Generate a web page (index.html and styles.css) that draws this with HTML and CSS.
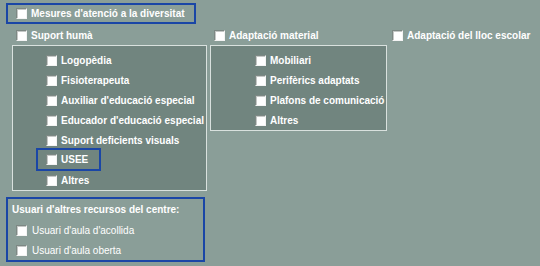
FILE: index.html
```html
<!DOCTYPE html>
<html lang="ca">
<head>
    <meta charset="UTF-8">
    <title>Mesures d'atenció a la diversitat</title>
    <link rel="stylesheet" href="styles.css">
</head>
<body>
    <div class="page">
        <div class="main-check">
            <span class="check"></span>
            <span class="label">Mesures d'atenció a la diversitat</span>
        </div>

        <div class="columns">
            <div class="group group-human">
                <div class="group-head">
                    <span class="check"></span>
                    <span class="label">Suport humà</span>
                </div>
                <div class="group-box">
                    <div class="item"><span class="check"></span><span class="label">Logopèdia</span></div>
                    <div class="item"><span class="check"></span><span class="label">Fisioterapeuta</span></div>
                    <div class="item"><span class="check"></span><span class="label">Auxiliar d'educació especial</span></div>
                    <div class="item"><span class="check"></span><span class="label">Educador d'educació especial</span></div>
                    <div class="item"><span class="check"></span><span class="label">Suport deficients visuals</span></div>
                    <div class="item marked"><span class="check"></span><span class="label">USEE</span></div>
                    <div class="item"><span class="check"></span><span class="label">Altres</span></div>
                </div>
            </div>

            <div class="group group-material">
                <div class="group-head">
                    <span class="check"></span>
                    <span class="label">Adaptació material</span>
                </div>
                <div class="group-box">
                    <div class="item"><span class="check"></span><span class="label">Mobiliari</span></div>
                    <div class="item"><span class="check"></span><span class="label">Perifèrics adaptats</span></div>
                    <div class="item"><span class="check"></span><span class="label">Plafons de comunicació</span></div>
                    <div class="item"><span class="check"></span><span class="label">Altres</span></div>
                </div>
            </div>

            <div class="group group-place">
                <div class="group-head">
                    <span class="check"></span>
                    <span class="label">Adaptació del lloc escolar</span>
                </div>
            </div>
        </div>

        <div class="resources">
            <div class="resources-title">Usuari d'altres recursos del centre:</div>
            <div class="res-item"><span class="check"></span><span class="label">Usuari d'aula d'acollida</span></div>
            <div class="res-item"><span class="check"></span><span class="label">Usuari d'aula oberta</span></div>
        </div>
    </div>
</body>
</html>
```

FILE: styles.css
```css
body {
    margin: 0;
    padding: 0;
    background-color: #8a9e98;
    font-family: "Liberation Sans", Arial, sans-serif;
    color: #fff;
}

.page {
    padding: 3px 0 0 6px;
}

.check {
    display: inline-block;
    width: 9px;
    height: 9px;
    background-color: #fff;
    border: 1px solid;
    border-color: #7d8884 #f4f4f4 #f4f4f4 #7d8884;
    box-shadow: inset 1px 1px 0 #c4c8c6;
    flex-shrink: 0;
}

.label {
    font-size: 10px;
    font-weight: bold;
    white-space: nowrap;
}

.main-check {
    display: flex;
    align-items: center;
    gap: 4px;
    width: 178px;
    height: 17px;
    padding-left: 8px;
    border: 2px solid #1a46a6;
}

.columns {
    display: flex;
    margin-top: 3px;
}

.group-head {
    display: flex;
    align-items: center;
    gap: 4px;
    height: 17px;
    padding-left: 10px;
}

.group-box {
    margin-top: 1px;
    padding-top: 4px;
    background-color: #71857f;
    border: 1px solid #d9e1de;
}

.group-human .group-box {
    width: 160px;
    margin-left: 6px;
    padding-left: 33px;
}

.group-material {
    margin-left: 3px;
}

.group-material .group-head {
    padding-left: 4px;
}

.group-material .group-box {
    width: 131px;
    padding-left: 44px;
}

.group-place .group-head {
    padding-left: 5px;
}

.item {
    display: flex;
    align-items: center;
    gap: 4px;
    width: fit-content;
    height: 20px;
}

.item.marked {
    height: 19px;
    padding: 0 11px 0 8px;
    margin: 0 0 1px -8px;
    outline: 2px solid #1a46a6;
}

.resources {
    width: 191px;
    height: 61px;
    margin-top: 6px;
    padding-left: 4px;
    border: 2px solid #1a46a6;
}

.resources-title {
    font-size: 10px;
    font-weight: bold;
    height: 20px;
    padding-top: 1px;
    line-height: 20px;
}

.res-item {
    display: flex;
    align-items: center;
    gap: 5px;
    height: 20px;
    padding-left: 4px;
}

.res-item .label {
    font-weight: normal;
}
```
